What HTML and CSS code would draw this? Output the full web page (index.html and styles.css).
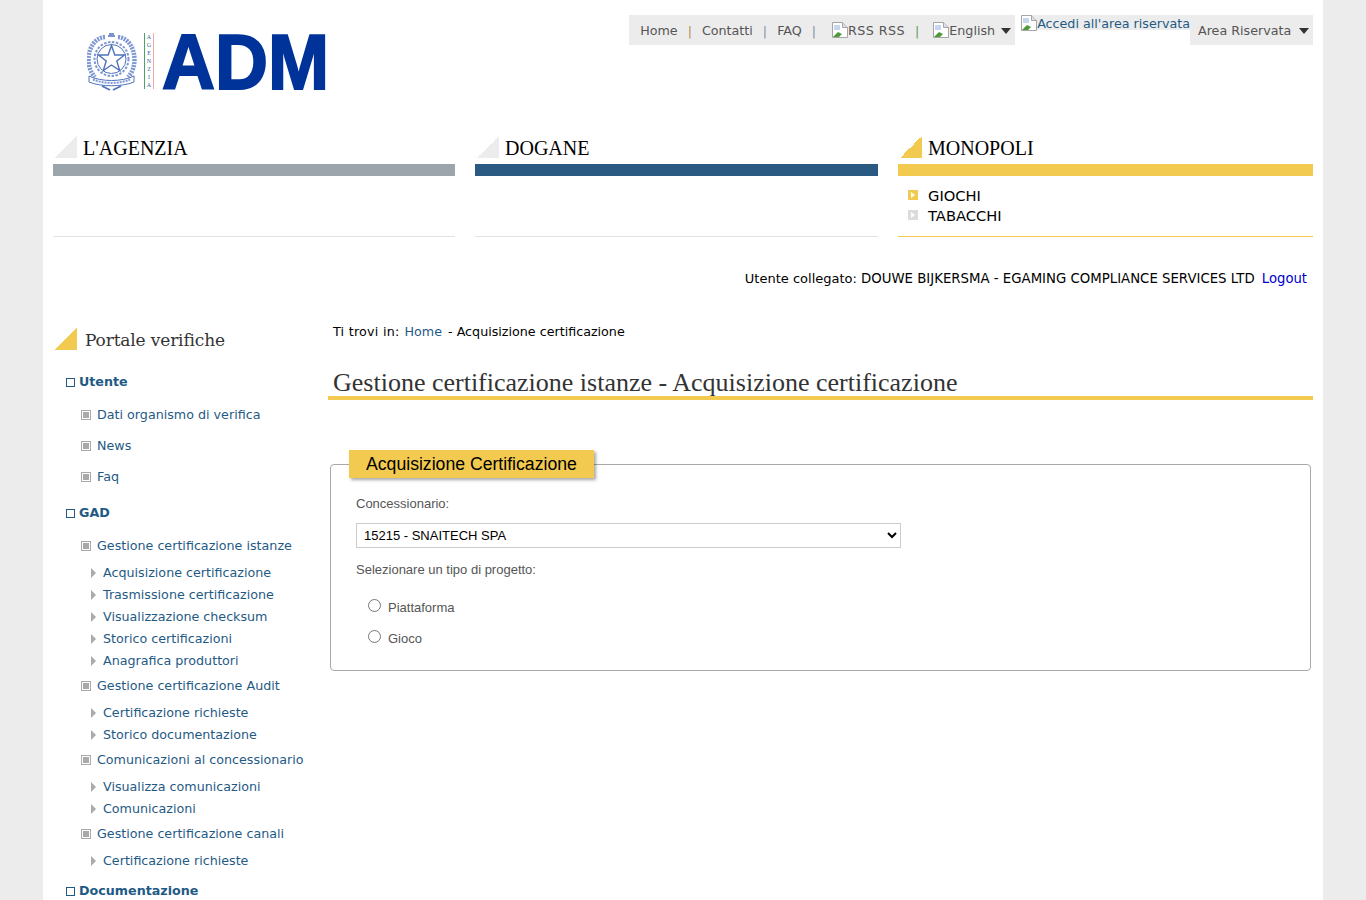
FILE: index.html
```html
<!DOCTYPE html>
<html lang="it">
<head>
  <meta charset="UTF-8" />
  <meta name="viewport" content="width=device-width, initial-scale=1.0" />
  <title>Acquisizione certificazione</title>
  <link rel="stylesheet" href="styles.css">
</head>
<body>
  <div class="wrapper">
    <div class="header">
      <div class="logo">
        <svg class="emblem" width="50" height="58" viewBox="0 0 50 58" fill="none" stroke="#4f72bd">
          <circle cx="24.500" cy="26" r="17" stroke-width="2" stroke-dasharray="2.500 1.500" stroke="#7d97d3"/>
          <circle cx="24.500" cy="26" r="14.500" stroke-width="1"/>
          <path d="M24.500 12.500 L27.800 22 L37.500 22 L29.800 28 L32.700 37.500 L24.500 32 L16.300 37.500 L19.200 28 L11.500 22 L21.200 22Z" stroke-width="1.400"/>
          <path d="M18 4 C8 5 2 14 1.500 26 C1.500 34 4 40 8 44" stroke-width="4.500" stroke-dasharray="2 1" stroke="#7d97d3"/>
          <path d="M31 4 C41 5 47 14 47.500 26 C47.500 34 45 40 41 44" stroke-width="4.500" stroke-dasharray="2 1" stroke="#7d97d3"/>
          <path d="M21 3 h7 M22 1 h5" stroke-width="1.500"/>
          <path d="M2 43 C14 49 35 49 47 43 L47 49 C35 54 14 54 2 49Z" stroke-width="1" fill="#fff"/>
          <path d="M6 46.500 C16 51 33 51 43 46.500" stroke-width="2" stroke-dasharray="2 1" stroke="#7d97d3"/>
          <path d="M15 53 l8 4 M34 53 l-8 4" stroke-width="1.800"/>
        </svg>
        <div class="agenzia"><span>A</span><span>G</span><span>E</span><span>N</span><span>Z</span><span>I</span><span>A</span></div>
        <div class="adm">ADM</div>
      </div>
      <div class="topnav">
        <div class="toolbar">
          <a>Home</a><i class="sep orange">|</i>
          <a>Contatti</a><i class="sep slate">|</i>
          <a>FAQ</a><i class="sep slate">|</i>
          <a class="img-link rss"><svg class="broken" width="16" height="16" viewBox="0 0 16 16"><path d="M.5.5h10l5 5v10H.5z" fill="#fff" stroke="#a5a5a5"/><path d="M10.500.5v5h5" fill="#dde" stroke="#a5a5a5"/><path d="M2 3h6v5H2z" fill="#c6d6ee"/><path d="M1 15l5-5 4 2-3 3z" fill="#4e9a38"/><path d="M9 15l6-6v6z" fill="#fff"/></svg>RSS RSS</a><i class="sep green">|</i>
          <a class="img-link"><svg class="broken" width="16" height="16" viewBox="0 0 16 16"><path d="M.5.5h10l5 5v10H.5z" fill="#fff" stroke="#a5a5a5"/><path d="M10.500.5v5h5" fill="#dde" stroke="#a5a5a5"/><path d="M2 3h6v5H2z" fill="#c6d6ee"/><path d="M1 15l5-5 4 2-3 3z" fill="#4e9a38"/><path d="M9 15l6-6v6z" fill="#fff"/></svg>English</a><b class="caret"></b>
        </div>
        <a class="accedi"><svg class="broken" width="16" height="16" viewBox="0 0 16 16"><path d="M.5.5h10l5 5v10H.5z" fill="#fff" stroke="#a5a5a5"/><path d="M10.500.5v5h5" fill="#dde" stroke="#a5a5a5"/><path d="M2 3h6v5H2z" fill="#c6d6ee"/><path d="M1 15l5-5 4 2-3 3z" fill="#4e9a38"/><path d="M9 15l6-6v6z" fill="#fff"/></svg>Accedi all'area riservata</a>
        <div class="toolbar area">
          <a>Area Riservata</a><b class="caret"></b>
        </div>
      </div>
    </div>

    <div class="sections">
      <div class="section grey">
        <h2><span class="corner"></span>L'AGENZIA</h2>
        <div class="bar"></div>
      </div>
      <div class="section blue">
        <h2><span class="corner"></span>DOGANE</h2>
        <div class="bar"></div>
      </div>
      <div class="section yellow">
        <h2><span class="corner"></span>MONOPOLI</h2>
        <div class="bar"></div>
        <ul>
          <li><span class="sq on"></span>GIOCHI</li>
          <li><span class="sq"></span>TABACCHI</li>
        </ul>
      </div>
    </div>

    <div class="userline">Utente collegato: <span class="uname">DOUWE BIJKERSMA - EGAMING COMPLIANCE SERVICES LTD</span> <a>Logout</a></div>

    <div class="main">
      <div class="sidebar">
        <h3><span class="corner"></span>Portale verifiche</h3>
        <div class="lev1">Utente</div>
        <div class="lev2 first">Dati organismo di verifica</div>
        <div class="lev2">News</div>
        <div class="lev2">Faq</div>
        <div class="lev1">GAD</div>
        <div class="lev2 first">Gestione certificazione istanze</div>
        <div class="lev3 first">Acquisizione certificazione</div>
        <div class="lev3">Trasmissione certificazione</div>
        <div class="lev3">Visualizzazione checksum</div>
        <div class="lev3">Storico certificazioni</div>
        <div class="lev3">Anagrafica produttori</div>
        <div class="lev2 sub">Gestione certificazione Audit</div>
        <div class="lev3 first">Certificazione richieste</div>
        <div class="lev3">Storico documentazione</div>
        <div class="lev2 sub">Comunicazioni al concessionario</div>
        <div class="lev3 first">Visualizza comunicazioni</div>
        <div class="lev3">Comunicazioni</div>
        <div class="lev2 sub">Gestione certificazione canali</div>
        <div class="lev3 first">Certificazione richieste</div>
        <div class="lev1 last">Documentazione</div>
      </div>

      <div class="content">
        <div class="crumbs"><span class="here">Ti trovi in:</span> <a>Home</a> - Acquisizione certificazione</div>
        <h1>Gestione certificazione istanze - Acquisizione certificazione</h1>
        <fieldset>
          <legend>Acquisizione Certificazione</legend>
          <label class="lbl">Concessionario:</label>
          <select>
            <option>15215 - SNAITECH SPA</option>
          </select>
          <label class="lbl second">Selezionare un tipo di progetto:</label>
          <label class="radio"><input type="radio" name="tipo" />Piattaforma</label>
          <label class="radio"><input type="radio" name="tipo" />Gioco</label>
        </fieldset>
      </div>
    </div>
  </div>
</body>
</html>
```

FILE: styles.css
```css
html, body {
  margin: 0;
  padding: 0;
}
body {
  background: #ececec;
  font-family: "DejaVu Sans", Verdana, sans-serif;
  font-size: 12.7px;
  color: #000;
}
a {
  color: #1f5a85;
}
.wrapper {
  width: 1260px;
  margin: 0 auto;
  padding: 0 10px;
  background: #fff;
  height: 900px;
  overflow: hidden;
}

/* header */
.header {
  display: flex;
  justify-content: space-between;
  height: 136px;
}
.logo {
  display: flex;
  align-items: flex-start;
  padding: 33px 0 0 34px;
}
.emblem {
  margin-right: 7px;
}
.agenzia {
  width: 8px;
  height: 56px;
  margin-right: 8px;
  border-left: 1px solid #4aa564;
  border-right: 1px solid #f0a8a0;
  display: flex;
  flex-direction: column;
  justify-content: space-between;
  align-items: center;
  font-family: "Liberation Serif", serif;
  font-size: 6px;
  line-height: 8px;
  color: #3a5fb0;
}
.adm {
  font-family: "Liberation Sans", Arial, sans-serif;
  font-weight: bold;
  font-size: 78px;
  line-height: 58px;
  color: #003399;
  -webkit-text-stroke: 2px #003399;
  transform: scaleX(0.94);
  transform-origin: left top;
}
.topnav {
  display: flex;
  align-items: flex-start;
  padding-top: 15px;
}
.toolbar {
  display: flex;
  align-items: center;
  height: 30px;
  padding: 0 4px 0 11px;
  background: #ececec;
  color: #555;
}
.toolbar a {
  color: #555;
}
.sep {
  font-style: normal;
  margin: 0 10px;
}
.orange {
  color: #b08a5a;
}
.slate {
  color: #7f8f9c;
}
.green {
  color: #5f9a5f;
}
.img-link {
  display: flex;
  align-items: center;
  margin-left: 4px;
}
.img-link.rss {
  margin-left: 6px;
  letter-spacing: 0.450px;
}
.broken {
  flex: none;
}
.caret {
  width: 0;
  height: 0;
  margin: 2px 0 0 6px;
  border-left: 5.500px solid transparent;
  border-right: 5.500px solid transparent;
  border-top: 6px solid #333;
}
.accedi {
  display: flex;
  align-items: flex-start;
  height: 15px;
  margin-left: 6px;
  line-height: 18px;
  background: #ececec;
  white-space: nowrap;
}
.area {
  padding: 0 4px 0 8px;
  width: 111px;
  justify-content: space-between;
}

/* sezioni */
.sections {
  display: grid;
  grid-template-columns: 402px 403px 415px;
  gap: 20px;
}
.section {
  height: 100px;
  border-bottom: 1px solid #e2e2e2;
}
.section h2 {
  display: flex;
  align-items: flex-end;
  height: 22px;
  margin: 0 0 6px;
  font-family: "Liberation Serif", serif;
  font-size: 20px;
  font-weight: normal;
  line-height: 20px;
}
.corner {
  flex: none;
  width: 22px;
  height: 22px;
  margin: 0 6px 0 2px;
  background: linear-gradient(to bottom right, transparent 50%, #ececec 50%);
}
.section .bar {
  height: 12px;
}
.grey .bar {
  background: #9ca5ac;
}
.blue .bar {
  background: #2a5a82;
}
.yellow {
  border-bottom-color: #f3ca50;
}
.yellow .bar {
  background: #f3ca50;
}
.yellow .corner, .sidebar .corner {
  background: linear-gradient(to bottom right, transparent 50%, #f3ca50 50%);
}
.section ul {
  list-style: none;
  margin: 9px 0 0;
  padding: 0;
  font-size: 14.700px;
}
.section li {
  display: flex;
  align-items: center;
  height: 20px;
}
.sq {
  position: relative;
  width: 10px;
  height: 10px;
  margin: 0 10px;
  background: #dcdcdc;
}
.sq:after {
  content: "";
  position: absolute;
  left: 3px;
  top: 2px;
  border-left: 4px solid #fff;
  border-top: 3px solid transparent;
  border-bottom: 3px solid transparent;
}
.sq.on {
  background: #f3ca50;
}

.userline {
  margin-top: 34px;
  padding-right: 6px;
  height: 16px;
  line-height: 16px;
  font-size: 13px;
  text-align: right;
}
.uname {
  font-size: 13.300px;
}
.userline a {
  margin-left: 3px;
  color: #0000cc;
  font-size: 13.200px;
}

/* colonne */
.main {
  display: flex;
  margin-top: 35px;
}
.sidebar {
  flex: none;
  width: 275px;
  padding-top: 6px;
  color: #1f5a85;
}
.sidebar h3 {
  display: flex;
  align-items: flex-end;
  height: 22px;
  margin: 0 0 24px;
  font-family: "DejaVu Serif", Georgia, serif;
  font-size: 17px;
  line-height: 20px;
  letter-spacing: -0.150px;
  font-weight: normal;
  color: #333;
}
.sidebar .corner {
  margin-right: 8px;
}
.lev1 {
  position: relative;
  margin-top: 20px;
  padding-left: 26px;
  line-height: 16px;
  font-weight: bold;
}
.sidebar h3 + .lev1 {
  margin-top: 0;
}
.lev1.last {
  margin-top: 14px;
}
.lev1:before {
  content: "";
  position: absolute;
  left: 13px;
  top: 4px;
  width: 7px;
  height: 7px;
  border: 1px solid #1f5a85;
}
.lev2 {
  position: relative;
  margin-top: 15px;
  padding-left: 44px;
  line-height: 16px;
}
.lev2.first {
  margin-top: 17px;
}
.lev2.sub {
  margin-top: 9px;
}
.lev2:before {
  content: "";
  position: absolute;
  left: 28px;
  top: 3px;
  width: 6px;
  height: 6px;
  border: 2px solid #fff;
  outline: 1px solid #aaa;
  outline-offset: -1px;
  background: #aaa;
}
.lev3 {
  position: relative;
  margin-top: 6px;
  padding-left: 50px;
  line-height: 16px;
}
.lev3.first {
  margin-top: 11px;
}
.lev3:before {
  content: "";
  position: absolute;
  left: 38px;
  top: 3px;
  border-left: 5px solid #aaa;
  border-top: 5px solid transparent;
  border-bottom: 5px solid transparent;
}

/* contenuto */
.content {
  flex: 1;
}
.crumbs {
  padding-left: 5px;
  line-height: 16px;
  margin-top: 2px;
}
.here {
  letter-spacing: 0.250px;
}
.crumbs a {
  margin: 0 2px 0 1px;
  color: #1f5a85;
}
.content h1 {
  margin: 28px 0 0;
  padding-left: 5px;
  height: 28px;
  border-bottom: 4px solid #f3ca50;
  font-family: "Liberation Serif", serif;
  font-size: 26px;
  font-weight: normal;
  line-height: 30px;
  color: #333;
}
fieldset {
  margin: 50px 2px 0;
  padding: 0 25px;
  height: 219px;
  border: 1px solid #aaa;
  border-radius: 4px;
  font-family: "Liberation Sans", Arial, sans-serif;
  font-size: 13px;
  color: #555;
}
legend {
  margin-left: -7px;
  padding: 0 17px 0 17px;
  height: 28px;
  background: #f3ca50;
  box-shadow: 2px 2px 3px rgba(0, 0, 0, 0.35);
  font-size: 17.650px;
  line-height: 28px;
  color: #000;
}
.lbl {
  display: block;
  line-height: 16px;
  margin-top: 18px;
}
.lbl.second {
  margin-top: 14px;
}
select {
  display: block;
  width: 545px;
  height: 25px;
  margin-top: 11px;
  padding: 0 3px;
  background: #fff;
  border: 1px solid #ccc;
  font-family: "Liberation Sans", Arial, sans-serif;
  font-size: 13px;
  color: #000;
}
.radio {
  display: flex;
  align-items: center;
  height: 31px;
  padding-left: 12px;
}
.lbl.second + .radio {
  margin-top: 14px;
}
.radio input {
  width: 13px;
  height: 13px;
  margin: 0 7px 5px 0;
}
```
